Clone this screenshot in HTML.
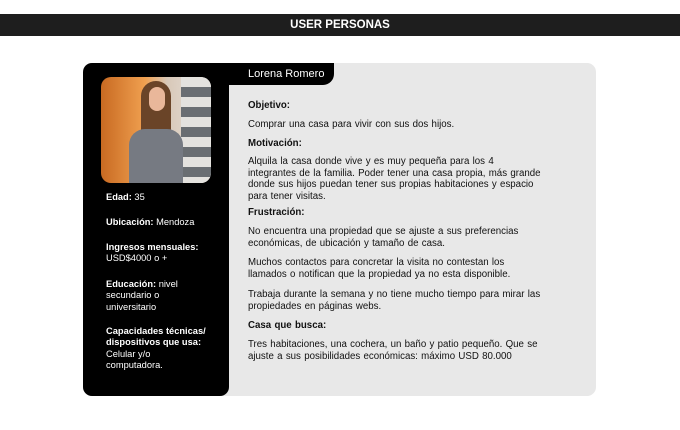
<!DOCTYPE html>
<html><head><style>
body{margin:0;width:680px;height:430px;background:#fff;font-family:"Liberation Sans",Arial,sans-serif;position:relative;overflow:hidden}
.bar{position:absolute;left:0;top:14px;width:680px;height:22px;background:#1e1e1e;color:#fff;font-weight:bold;font-size:11.5px;text-align:center;line-height:22px}
.card{position:absolute;left:83px;top:63px;width:513px;height:333px;background:#e8e8e8;border-radius:9px;overflow:hidden}
.side{position:absolute;left:0;top:0;width:146px;height:333px;background:#000;border-radius:0 0 9px 0}
.tab{position:absolute;left:146px;top:0;width:105px;height:22px;background:#000;border-radius:0 0 11px 0;color:#fff;font-size:11px;line-height:22px;padding-left:19px;box-sizing:border-box}
.photo{position:absolute;left:18px;top:14px;width:110px;height:106px;border-radius:10px;overflow:hidden;background:linear-gradient(90deg,#c86a22 0%,#f0a050 40%,#d8c8b8 60%,#e8e4e0 100%)}
.t{position:absolute;font-size:9.3px;line-height:11.3px;color:#fff}
.m{position:absolute;font-size:9.7px;line-height:11.7px;color:#111;left:165px;width:340px;word-spacing:0.6px}
b{font-weight:bold}
</style></head><body>
<div class="bar">USER PERSONAS</div>
<div class="card">
<div class="side"></div>
<div class="tab">Lorena Romero</div>
<div class="photo">
<div style="position:absolute;left:80px;top:0;width:30px;height:106px;background:repeating-linear-gradient(180deg,#e4e2de 0 10px,#6a6e72 10px 20px)"></div>
<div style="position:absolute;left:40px;top:4px;width:30px;height:80px;background:#6a4428;border-radius:15px 15px 4px 4px"></div>
<div style="position:absolute;left:48px;top:10px;width:16px;height:24px;background:#e9b79a;border-radius:8px"></div>
<div style="position:absolute;left:28px;top:52px;width:54px;height:54px;background:#767a82;border-radius:16px 16px 0 0"></div>
</div>
<div class="t" style="left:23px;top:129px"><b>Edad:</b> 35</div>
<div class="t" style="left:23px;top:154px"><b>Ubicación:</b> Mendoza</div>
<div class="t" style="left:23px;top:179px"><b>Ingresos mensuales:</b><br>USD$4000 o +</div>
<div class="t" style="left:23px;top:216px"><b>Educación:</b> nivel<br>secundario o<br>universitario</div>
<div class="t" style="left:23px;top:263px"><b>Capacidades técnicas/<br>dispositivos que usa:</b><br>Celular y/o<br>computadora.</div>
<div class="m" style="top:37px"><b>Objetivo:</b></div>
<div class="m" style="top:56px">Comprar una casa para vivir con sus dos hijos.</div>
<div class="m" style="top:75px"><b>Motivación:</b></div>
<div class="m" style="top:93px">Alquila la casa donde vive y es muy pequeña para los 4<br>integrantes de la familia. Poder tener una casa propia, más grande<br>donde sus hijos puedan tener sus propias habitaciones y espacio<br>para tener visitas.</div>
<div class="m" style="top:144px"><b>Frustración:</b></div>
<div class="m" style="top:163px">No encuentra una propiedad que se ajuste a sus preferencias<br>económicas, de ubicación y tamaño de casa.</div>
<div class="m" style="top:194px">Muchos contactos para concretar la visita no contestan los<br>llamados o notifican que la propiedad ya no esta disponible.</div>
<div class="m" style="top:226px">Trabaja durante la semana y no tiene mucho tiempo para mirar las<br>propiedades en páginas webs.</div>
<div class="m" style="top:257px"><b>Casa que busca:</b></div>
<div class="m" style="top:276px">Tres habitaciones, una cochera, un baño y patio pequeño. Que se<br>ajuste a sus posibilidades económicas: máximo USD 80.000</div>
</div>
</body></html>
